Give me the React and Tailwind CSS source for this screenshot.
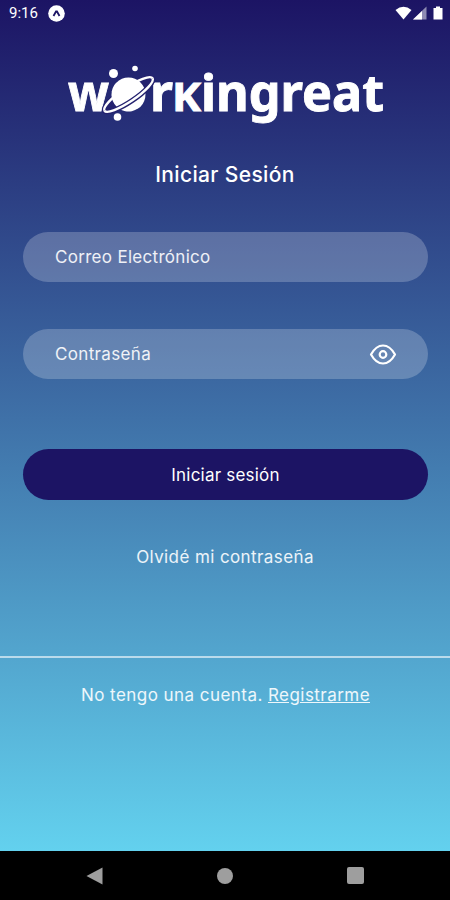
import React from 'react'

const Logo = () => (
  <svg
    width="320"
    height="88"
    viewBox="0 -16 320 88"
    fill="#ffffff"
    className="overflow-visible font-['Noto_Sans',sans-serif] font-bold"
    role="img"
    aria-label="workingreat"
  >
    <g stroke="#ffffff" strokeWidth="0.900">
      <text x="3" y="46.500" fontSize="50" textLength="41" lengthAdjust="spacingAndGlyphs">w</text>
      <text x="85" y="46.500" fontSize="50" textLength="23" lengthAdjust="spacingAndGlyphs">r</text>
      <text x="107" y="46.500" fontSize="38.500" textLength="29" lengthAdjust="spacingAndGlyphs">K</text>
      <text x="136" y="46.500" fontSize="50" textLength="183" lengthAdjust="spacingAndGlyphs">ingreat</text>
    </g>

    {/* Planet */}
    <g transform="translate(63.500 30.500) rotate(-34)">
      <ellipse cx="0" cy="0" rx="29" ry="7" fill="#24226f" stroke="#24226f" strokeWidth="4.500" />
      <ellipse cx="0" cy="0" rx="29" ry="7" fill="none" stroke="#ffffff" strokeWidth="2.400" />
      <circle cx="0" cy="0" r="17" />
      <path d="M-29 0 A29 7 0 0 0 29 0" fill="none" stroke="#24226f" strokeWidth="5.200" />
      <path d="M-29 0 A29 7 0 0 0 29 0" fill="none" stroke="#ffffff" strokeWidth="2.400" />
    </g>

    {/* Moons */}
    <circle cx="48.500" cy="9.500" r="4.500" />
    <circle cx="70" cy="4.500" r="2.800" />
    <circle cx="52.500" cy="53" r="3.800" />
  </svg>
)

const StatusBar = () => (
  <div className="flex h-[27px] items-center justify-between pl-[9px] pr-[6px]">
    <div className="flex items-center gap-[10px]">
      <span className="font-['Roboto',sans-serif] text-[15px] leading-none text-white">9:16</span>
      <svg width="17" height="17" viewBox="0 0 17 17">
        <circle cx="8.500" cy="8.500" r="8.300" fill="#ffffff" />
        <path d="M5.500 11 L8 6.500 H9 L11.500 11" fill="none" stroke="#1c1464" strokeWidth="1.800" />
      </svg>
    </div>
    <svg width="49" height="16" viewBox="0 0 49 16" fill="#ffffff">
      <path d="M0.500 4 Q8.500 -2.500 16.500 4 L8.500 13.500 Z" />
      <path d="M18 13.500 L31.500 0.500 V13.500 Z" opacity="0.500" />
      <path d="M18 13.500 L27 5 V13.500 Z" />
      <path d="M38.500 2 H41 V0.500 H45 V2 H47.500 V13.500 H38.500 Z" />
    </svg>
  </div>
)

const EyeIcon = () => (
  <svg width="28" height="22" viewBox="0 0 28 22" fill="none" stroke="#ffffff" strokeWidth="2.200">
    <path d="M2 10.500 Q7 1.500 14 1.500 Q21 1.500 26 10.500 Q21 19.500 14 19.500 Q7 19.500 2 10.500 Z" strokeLinejoin="round" />
    <circle cx="14" cy="10.500" r="3.300" />
  </svg>
)

const NavBar = () => (
  <div className="flex h-[49px] items-center justify-around bg-black px-[29px]">
    <svg width="18" height="18" viewBox="0 0 18 18" fill="#9e9e9e">
      <path d="M0.500 9 L16.500 0.500 V17.500 Z" />
    </svg>
    <div className="h-4 w-4 rounded-full bg-[#9e9e9e]" />
    <div className="h-[17px] w-[17px] rounded-[2px] bg-[#9e9e9e]" />
  </div>
)

const App = () => {
  return (
    <div className="flex h-[900px] w-[450px] flex-col overflow-hidden font-['Inter',sans-serif] text-white">
      <div className="flex flex-1 flex-col bg-linear-to-b/srgb from-[#1c1464] to-[#63d1ee]">
        <StatusBar />

        <div className="mt-[21px] flex justify-center">
          <Logo />
        </div>

        <h1 className="mt-[23px] text-center text-[21px] font-medium leading-[32px] tracking-[0.350px]">
          Iniciar Sesión
        </h1>

        {/* Form */}
        <div className="mt-[41px] flex flex-col pl-[23px] pr-[22px]">
          <div className="flex h-[50px] items-center rounded-full bg-white/22 pl-[32px] pt-[2px]">
            <span className="text-[17px] tracking-[0.300px] text-white/90">Correo Electrónico</span>
          </div>
          <div className="mt-[47px] flex h-[50px] items-center justify-between rounded-full bg-white/22 pl-[32px] pr-[31px] pt-[2px]">
            <span className="text-[17px] tracking-[0.350px] text-white/90">Contraseña</span>
            <EyeIcon />
          </div>
          <button className="mt-[70px] h-[51px] rounded-full bg-[#1c1464] pt-[2px] text-[17px] tracking-[0.200px]">
            Iniciar sesión
          </button>
        </div>

        <p className="mt-[45px] text-center text-[17px] leading-6 tracking-[0.400px] text-white/90">
          Olvidé mi contraseña
        </p>

        <div className="mt-[87px] h-[2px] bg-white/60" />

        <p className="mt-[25px] pl-px text-center text-[17px] leading-6 tracking-[0.450px] text-white/90">
          No tengo una cuenta. <a className="underline">Registrarme</a>
        </p>
      </div>
      <NavBar />
    </div>
  )
}

export default App
